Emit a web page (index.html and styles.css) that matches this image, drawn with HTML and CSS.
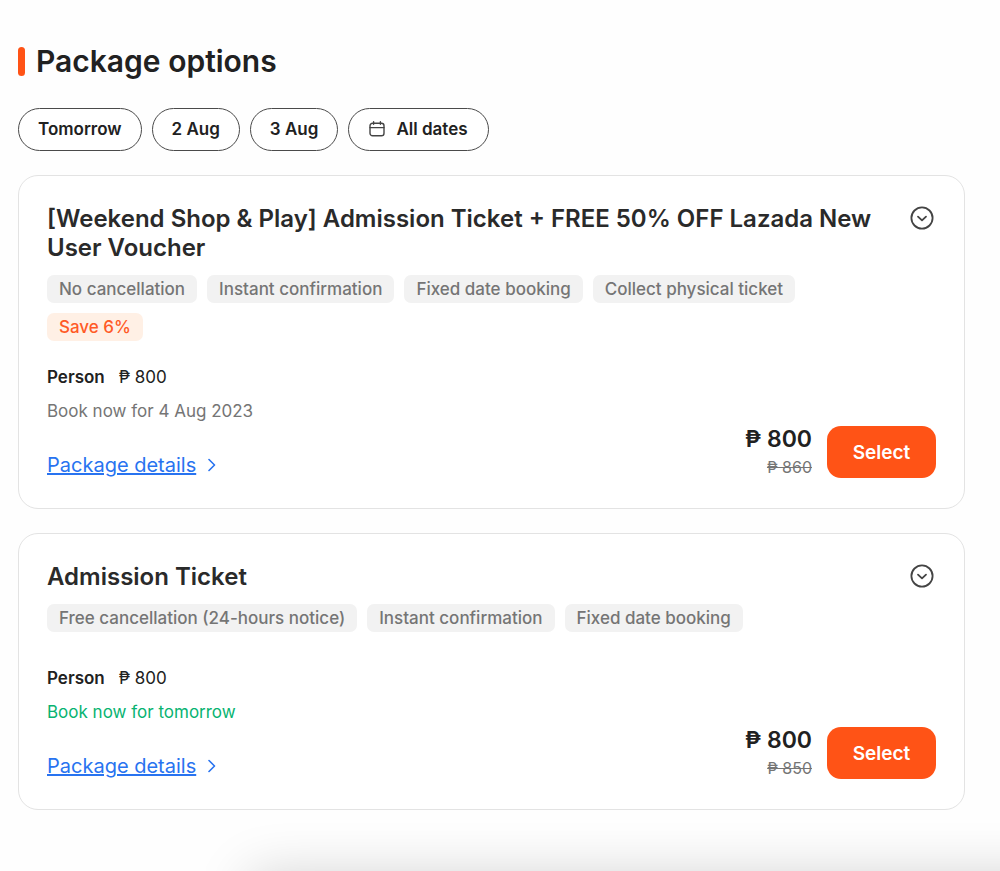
FILE: index.html
```
<!DOCTYPE html>
<html lang="en">
  <head>
    <meta charset="utf-8" />
    <meta name="viewport" content="width=device-width, initial-scale=1" />
    <title>Package options</title>
    <link rel="stylesheet" href="styles.css">
  </head>
  <body>
    <main class="packages">
      <h1 class="heading">Package options</h1>

      <div class="dates">
        <button type="button" class="date">Tomorrow</button>
        <button type="button" class="date">2 Aug</button>
        <button type="button" class="date">3 Aug</button>
        <button type="button" class="date all-dates">
          <svg class="calendar" viewBox="0 0 16 16" width="16" height="16">
            <rect x="1" y="2.2" width="14" height="12.6" rx="2.6" />
            <path d="M1 6.6h14M4.6 .8v2.4M11.4 .8v2.4" />
          </svg>
          All dates
        </button>
      </div>

      <section class="card">
        <div class="card-top">
          <h2 class="title">[Weekend Shop &amp; Play] Admission Ticket + FREE 50% OFF Lazada New User Voucher</h2>
          <button type="button" class="toggle" aria-label="Show more">
            <svg viewBox="0 0 24 24" width="24" height="24">
              <circle cx="12" cy="12" r="10.6" />
              <path d="M8 10.6l4 3.8 4-3.8" />
            </svg>
          </button>
        </div>
        <div class="tags">
          <span class="tag">No cancellation</span>
          <span class="tag">Instant confirmation</span>
          <span class="tag">Fixed date booking</span>
          <span class="tag">Collect physical ticket</span>
          <span class="tag save">Save 6%</span>
        </div>
        <div class="card-bottom">
          <div class="info">
            <p class="person"><b>Person</b> <span>₱ 800</span></p>
            <p class="book">Book now for 4 Aug 2023</p>
            <a href="#" class="details">
              <span>Package details</span>
              <svg viewBox="0 0 8 14" width="8" height="14"><path d="M1 1.5l5.5 5.5L1 12.5" /></svg>
            </a>
          </div>
          <div class="buy">
            <div class="prices">
              <div class="price">₱ 800</div>
              <del class="old-price">₱ 860</del>
            </div>
            <button type="button" class="select">Select</button>
          </div>
        </div>
      </section>

      <section class="card">
        <div class="card-top">
          <h2 class="title">Admission Ticket</h2>
          <button type="button" class="toggle" aria-label="Show more">
            <svg viewBox="0 0 24 24" width="24" height="24">
              <circle cx="12" cy="12" r="10.6" />
              <path d="M8 10.6l4 3.8 4-3.8" />
            </svg>
          </button>
        </div>
        <div class="tags no-promo">
          <span class="tag">Free cancellation (24-hours notice)</span>
          <span class="tag">Instant confirmation</span>
          <span class="tag">Fixed date booking</span>
        </div>
        <div class="card-bottom">
          <div class="info">
            <p class="person"><b>Person</b> <span>₱ 800</span></p>
            <p class="book available">Book now for tomorrow</p>
            <a href="#" class="details">
              <span>Package details</span>
              <svg viewBox="0 0 8 14" width="8" height="14"><path d="M1 1.5l5.5 5.5L1 12.5" /></svg>
            </a>
          </div>
          <div class="buy">
            <div class="prices">
              <div class="price">₱ 800</div>
              <del class="old-price">₱ 850</del>
            </div>
            <button type="button" class="select">Select</button>
          </div>
        </div>
      </section>
    </main>
    <div class="bottom-shadow"></div>
  </body>
</html>
```
FILE: styles.css
```
* {
  box-sizing: border-box;
}

body {
  margin: 0;
  background-color: #fefefe;
  color: #212121;
  font-family: Inter, "Open Sans", sans-serif;
  font-size: 17px;
}

h1,
h2,
p {
  margin: 0;
}

button {
  font-family: inherit;
  color: inherit;
  cursor: pointer;
}

svg {
  fill: none;
  stroke: currentColor;
  stroke-linecap: round;
  stroke-linejoin: round;
}

.packages {
  padding: 41px 35px 24px 18px;
}

.heading {
  display: flex;
  align-items: center;
  gap: 11px;
  font-size: 30px;
  font-weight: 600;
  line-height: 40px;
}

.heading::before {
  content: "";
  width: 7px;
  height: 29px;
  border-radius: 4px;
  background-color: #ff5316;
}

.dates {
  display: flex;
  flex-wrap: wrap;
  gap: 10px;
  margin: 27px 0 24px;
}

.date {
  display: flex;
  align-items: center;
  gap: 11px;
  height: 43px;
  padding: 0 19px 1px;
  border: 1px solid #4a4a4a;
  border-radius: 22px;
  background-color: #fff;
  font-size: 17px;
  font-weight: 600;
}

.all-dates {
  padding: 0 20px 1px;
}

.calendar {
  color: #444;
  stroke-width: 1.4;
}

.card {
  margin-bottom: 24px;
  padding: 28px;
  border: 1px solid #e3e3e3;
  border-radius: 20px;
  background-color: #fff;
}

.card-top {
  display: flex;
  align-items: flex-start;
  justify-content: space-between;
  gap: 24px;
}

.title {
  color: #2a2a2a;
  font-size: 24px;
  font-weight: 600;
  line-height: 29px;
}

.toggle {
  flex: none;
  margin: 2px;
  padding: 0;
  border: 0;
  background: none;
  color: #444;
}

.toggle svg {
  display: block;
  stroke-width: 1.8;
}

.tags {
  display: flex;
  flex-wrap: wrap;
  gap: 10px;
  margin: 13px 0 24px;
  padding-right: 80px;
}

.no-promo {
  margin-bottom: 34px;
}

.tag {
  padding: 0 12px;
  border-radius: 7px;
  background-color: #f2f2f2;
  color: #757575;
  font-weight: 500;
  line-height: 28px;
}

.save {
  background-color: #fff0e5;
  color: #ff5a26;
}

.card-bottom {
  display: flex;
  align-items: flex-end;
  justify-content: space-between;
}

.person {
  display: flex;
  gap: 14px;
  line-height: 24px;
}

.person b {
  font-weight: 600;
}

.book {
  margin: 10px 0 27px;
  color: #757575;
  line-height: 24px;
}

.available {
  color: #08b371;
}

.details {
  display: flex;
  align-items: center;
  gap: 12px;
  color: #2873f0;
  font-size: 20px;
  line-height: 30px;
  text-decoration: none;
}

.details span {
  text-decoration: underline;
}

.details svg {
  stroke-width: 1.6;
}

.buy {
  display: flex;
  align-items: center;
  gap: 15px;
}

.prices {
  text-align: right;
}

.price {
  font-size: 23px;
  font-weight: 600;
  line-height: 30px;
}

.old-price {
  display: block;
  color: #757575;
  font-size: 16px;
  line-height: 26px;
}

.select {
  width: 109px;
  height: 52px;
  border: 0;
  border-radius: 14px;
  background-color: #ff5316;
  color: #fff;
  font-size: 19px;
  font-weight: 600;
}

.bottom-shadow {
  position: fixed;
  top: 100%;
  left: 250px;
  right: -100px;
  height: 80px;
  box-shadow: 0 4px 54px rgba(0, 0, 0, 0.18);
}
```
